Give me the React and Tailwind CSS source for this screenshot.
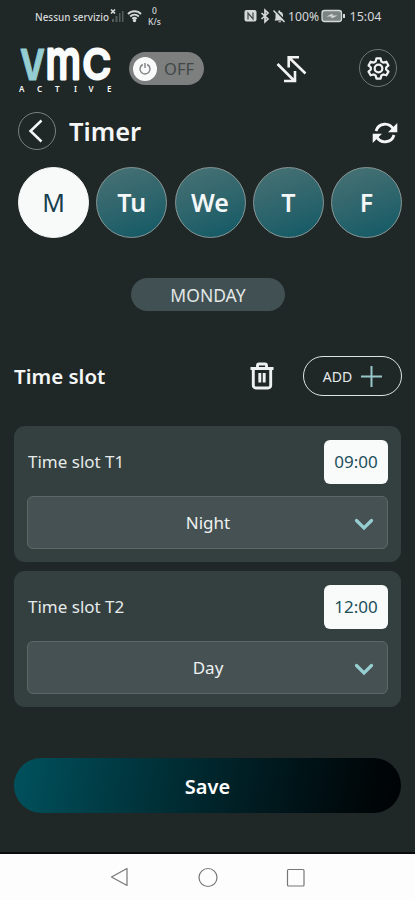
import { useState } from "react";

const days = ["M", "Tu", "We", "T", "F"];

const initialSlots = [
  { id: 1, label: "Time slot T1", time: "09:00", mode: "Night" },
  { id: 2, label: "Time slot T2", time: "12:00", mode: "Day" },
];

function StatusBar() {
  return (
    <div className="h-8 flex items-center justify-between pl-[35px] pr-[33px] text-[#d5d9d9]">
      <div className="flex items-center">
        <svg width="90" height="24" viewBox="0 0 90 24" fill="currentColor">
          <text x="0" y="17" fontSize="11.5" fontWeight="500" textLength="74" lengthAdjust="spacingAndGlyphs">Nessun servizio</text>
          <path d="M76 5.500l4 4M80 5.500L76 9.500" stroke="currentColor" strokeWidth="1.700" />
          <path d="M77 18v-3h2v3zM80.500 18v-6h2v6zM84 18V9h1.500v9zM87 18V7h1.500v11z" fill="#565d5d" />
        </svg>
        <svg className="ml-[2px]" width="15" height="14" viewBox="0 0 15 14" fill="none" stroke="currentColor" strokeWidth="1.900">
          <path d="M1 5C4.500 1.300 10.500 1.300 14 5M3.200 7.500c2.400-2.500 6.200-2.500 8.600 0M5.300 9.900c1.300-1.300 3.100-1.300 4.400 0" />
          <circle cx="7.500" cy="11.500" r=".8" fill="currentColor" />
        </svg>
        <div className="ml-[6px] w-[13px] text-center text-[8.500px] leading-[11px] font-medium">
          <div>0</div>
          <div>K/s</div>
        </div>
      </div>
      <div className="flex items-center">
        <svg width="44" height="16" viewBox="0 0 44 16" fill="none" stroke="currentColor">
          <rect x="0.500" y="2" width="12" height="11.500" rx="2" fill="currentColor" stroke="none" />
          <path d="M4 11.500V5l5 6V4.500" stroke="#4a5151" strokeWidth="1.300" />
          <path d="M17.500 5l6.500 6-3 2.800V2.200L24 5l-6.500 6" strokeWidth="1.700" />
          <path d="M30.500 12.500h10l-1.500-2V7c0-2-1.200-3.300-3-3.600V2.500h-1.500v.9C32.500 3.800 31.500 5 31.500 7v3.500zM34.500 13.300h2.500v1h-2.500z" fill="currentColor" stroke="none" />
          <path d="M30.500 1.500l11 11.500" stroke="#202727" strokeWidth="1.500" />
          <path d="M29.500 2.500l11 11.500" strokeWidth="1.500" />
        </svg>
        <svg width="94" height="24" viewBox="0 0 94 24" fill="currentColor">
          <text x="0" y="17" fontSize="12.500" textLength="31" lengthAdjust="spacingAndGlyphs">100%</text>
          <rect x="34" y="6.500" width="19.500" height="11" rx="2.500" fill="#7c8383" stroke="currentColor" strokeWidth="1.300" />
          <path d="M55 10h2v4h-2z" />
          <path d="M38.500 12.500l6-3v2h5l-6 3v-2z" />
          <text x="61.500" y="17" fontSize="12.500" textLength="32" lengthAdjust="spacingAndGlyphs">15:04</text>
        </svg>
      </div>
    </div>
  );
}

function Logo() {
  return (
    <svg className="shrink-0 overflow-visible" width="94" height="52" viewBox="0 0 94 52" fill="#fafbfb">
      <g fontFamily="Inter, sans-serif" strokeLinejoin="round">
        <text x="2" y="35.500" fontSize="43" fontWeight="700" fill="#94cdd2" stroke="#94cdd2" strokeWidth="1" textLength="25" lengthAdjust="spacingAndGlyphs">V</text>
        <text x="27.500" y="35" fontSize="54" fontWeight="500" stroke="#fafbfb" strokeWidth="2.800" textLength="35.500" lengthAdjust="spacingAndGlyphs">m</text>
        <text x="64.500" y="34.500" fontSize="41" fontWeight="500" stroke="#fafbfb" strokeWidth="2.800" textLength="28.500" lengthAdjust="spacingAndGlyphs">C</text>
      </g>
      <text x="1 19 37 56 70.500 89" y="48" fontSize="8" fontWeight="600">ACTIVE</text>
    </svg>
  );
}

function Header({ isOn, setIsOn }) {
  return (
    <div className="h-[76px] flex items-center pl-[18px] pr-[18px]">
      <Logo />
      <button
        onClick={() => setIsOn(!isOn)}
        className="ml-[17px] -mt-[3px] w-[75px] h-[33px] rounded-full bg-[#7d7f7f] flex items-center pl-[4px]"
      >
        <span className="size-[24px] rounded-full bg-[#f8f9f9] flex items-center justify-center">
          <svg width="14" height="14" viewBox="0 0 14 14" fill="none" stroke="#7c8282" strokeWidth="1.400">
            <path d="M4.800 2.500a5 5 0 1 0 4.400 0M7 1v5" />
          </svg>
        </span>
        <span className="ml-[7px] mt-[2px] text-[16.500px] text-[#414747]">{isOn ? "ON" : "OFF"}</span>
      </button>
      <svg className="ml-[72px] -mt-[3px]" width="32" height="32" viewBox="0 0 32 32" fill="none" stroke="#f1f3f3" strokeWidth="2.600">
        <path d="M1.500 11l17 17M8 28h11V18M29.500 20.500L13 4.500M12.700 14.500V4.200H23" />
      </svg>
      <button className="ml-auto -mt-[4px] size-[38px] rounded-full border border-[#707777] flex items-center justify-center text-[#f1f3f3]">
        <svg width="23" height="23" viewBox="0 0 24 24" fill="none" stroke="currentColor" strokeWidth="2.300" strokeLinejoin="round">
          <path d="M9.800 1.500h4.400l.8 3.200 2 1.200 3.200-1 2.200 3.900L20 11v2l2.400 2.300-2.200 3.800-3.200-.9-2 1.100-.8 3.200H9.800L9 19.300l-2-1.100-3.200.9-2.200-3.800L4 13v-2L1.600 8.800l2.200-3.900 3.200 1 2-1.200z" />
          <circle cx="12" cy="12" r="4" />
        </svg>
      </button>
    </div>
  );
}

function TimeSlot({ slot }) {
  return (
    <div className="h-[136px] rounded-[11px] bg-[#344040] px-[13px] pt-[14px]">
      <div className="flex items-center justify-between">
        <span className="ml-px text-[17px] text-[#e6eaea]">{slot.label}</span>
        <div className="w-[64px] h-[44px] rounded-[6px] bg-[#f9fafa] text-[17px] text-[#1d505a] flex items-center justify-center">
          {slot.time}
        </div>
      </div>
      <button className="mt-3 w-full h-[53px] rounded-[6px] border border-[#5b6868] bg-[#465153] grid grid-cols-[1fr_auto_1fr] items-center pl-[14px] pr-[13px] text-[17px] text-[#eef1f1]">
        <span className="col-start-2">{slot.mode}</span>
        <svg className="justify-self-end mt-[2px]" width="20" height="14" viewBox="0 0 20 14" fill="none" stroke="#96ced2" strokeWidth="3.200" strokeLinecap="round">
          <path d="M2.500 3.500l7.500 7.500L17.500 3.500" />
        </svg>
      </button>
    </div>
  );
}

function NavBar() {
  return (
    <div className="h-12 border-t-2 border-[#090c0c] bg-[#fdfdfd]">
      <svg className="w-full h-[46px]" viewBox="0 0 415 46" fill="none" stroke="#777" strokeWidth="1.200" strokeLinejoin="round">
        <path d="M127 14.500v17L111.500 23z" />
        <circle cx="208" cy="23.500" r="9" />
        <rect x="287.500" y="15.500" width="16.500" height="16.500" rx="1" />
      </svg>
    </div>
  );
}

function App() {
  const [isOn, setIsOn] = useState(false);
  const [selectedDay, setSelectedDay] = useState("M");
  const [slots, setSlots] = useState(initialSlots);

  const addSlot = () => {
    setSlots(prev => [...prev, {
      id: Date.now(), label: `Time slot T${prev.length + 1}`, time: "00:00", mode: "Day",
    }]);
  };

  return (
    <div className="w-full min-h-screen bg-[#202727] text-white flex flex-col font-['Noto_Sans',sans-serif]">
      <StatusBar />
      <Header isOn={isOn} setIsOn={setIsOn} />

      {/* Page title */}
      <div className="h-[46px] flex items-center pl-[18px] pr-[17px] text-[#f5f7f7]">
        <button className="size-[38px] rounded-full border border-[#7a8080] flex items-center justify-center">
          <svg className="-ml-[2px]" width="16" height="24" viewBox="0 0 16 24" fill="none" stroke="currentColor" strokeWidth="2.500">
            <path d="M13.500 1.500L2.500 12l11 10.500" />
          </svg>
        </button>
        <h1 className="ml-[13px] mt-px text-[25.500px] font-semibold">Timer</h1>
        <svg className="ml-auto mt-[4px]" width="26" height="22" viewBox="0 0 26 22" fill="none" stroke="currentColor" strokeWidth="2.800">
          <path d="M4 9C6.500.5 17.500 0 21.500 7.500M22 13C19.500 21.500 8.500 22 4.500 14.500" />
          <path d="M25.300 1v9.300H16zM.7 21v-9.300H10z" fill="currentColor" stroke="none" />
        </svg>
      </div>

      {/* Days */}
      <div className="mt-[13px] flex justify-between pl-[18px] pr-[13px]">
        {days.map(day => (
          <button
            key={day}
            onClick={() => setSelectedDay(day)}
            className={`size-[71px] rounded-full border pt-px text-[25px] flex items-center justify-center ${day === selectedDay
              ? "border-[#f8f9f9] bg-[#f8f9f9] text-[#163f4e]"
              : "border-[#879797] bg-linear-160 from-[#487274] to-[#0b5965] text-[#f4f7f7] font-semibold"}`}
          >
            {day}
          </button>
        ))}
      </div>

      <div className="mt-[40px] ml-[131px] w-[154px] h-[33px] rounded-full bg-[#415052] text-[#e2e7e7] text-[17.500px] pt-[2px] flex items-center justify-center">
        MONDAY
      </div>

      {/* Slots heading */}
      <div className="mt-[45px] h-10 flex items-center pl-[14px] pr-[13px]">
        <h2 className="mt-px text-[20.500px] font-semibold text-[#f5f7f7]">Time slot</h2>
        <svg className="ml-auto" width="24" height="28" viewBox="0 0 24 28" fill="none" stroke="#eef1f1" strokeWidth="2.900" strokeLinejoin="round">
          <path d="M0.500 6.500h23M3.300 7v16.500a2.500 2.500 0 0 0 2.500 2.500h12.400a2.500 2.500 0 0 0 2.500-2.500V7M7.500 6V3.500a1.500 1.500 0 0 1 1.500-1.500h6a1.500 1.500 0 0 1 1.500 1.500V6M9.800 11v9.500M14.200 11v9.500" />
        </svg>
        <button
          onClick={addSlot}
          className="ml-[29px] w-[99px] h-10 rounded-full border-[1.500px] border-[#dfe3e3] flex items-center justify-center gap-[9px] text-[14px] text-[#e6eaea]"
        >
          ADD
          <svg width="21" height="21" viewBox="0 0 21 21" stroke="#96c7ca" strokeWidth="2">
            <path d="M10.500 0v21M0 10.500h21" />
          </svg>
        </button>
      </div>

      <div className="mt-[30px] px-[14px] flex flex-col gap-[9px]">
        {slots.map(slot => <TimeSlot key={slot.id} slot={slot} />)}
      </div>

      <div className="mt-[51px] mb-[38px] px-[14px]">
        <button className="w-full h-[55px] rounded-full pt-[2px] bg-linear-100 from-[#00525e] to-[#000304] text-[20px] font-semibold">
          Save
        </button>
      </div>

      <div className="mt-auto">
        <NavBar />
      </div>
    </div>
  );
}

export default App;
